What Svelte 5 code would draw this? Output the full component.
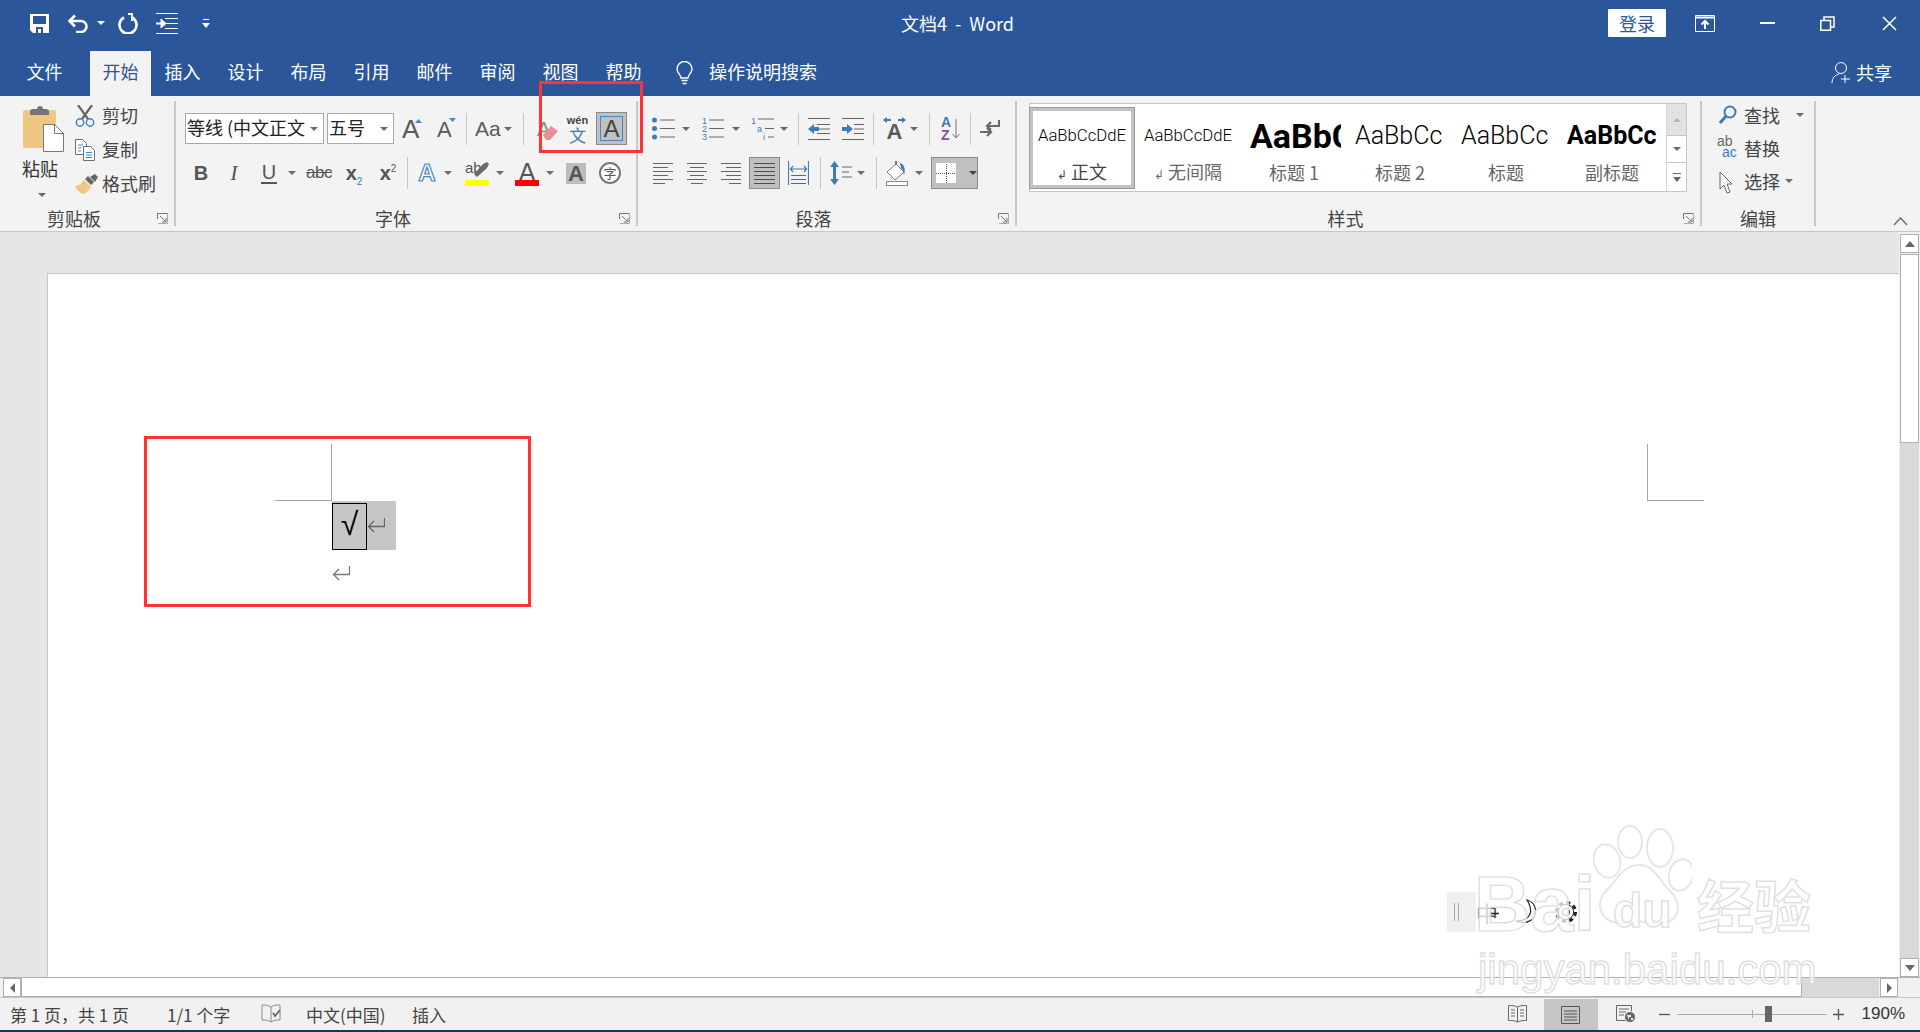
<script>
  const tabs = ['插入','设计','布局','引用','邮件','审阅','视图','帮助'];
</script>

{#snippet launcher()}
  <svg class="launch" width="11" height="11" viewBox="0 0 11 11" fill="none" stroke="#777"><path d="M.5 6V.5H10.5M3 3l6 6M9 5v4H5"/><path d="M10.5 1v9.5H1" stroke="#aaa"/></svg>
{/snippet}

<div class="app">
  <header class="titlebar">
    <div class="qat">
      <svg width="19" height="19" viewBox="0 0 19 19"><path fill="#fff" d="M0 0h19v19H3l-3-3z"/><path fill="#2b579a" d="M3 2h13v8H3zM6 13h7v6h-2v-4H8v4H6z"/></svg>
      <svg class="m18" width="22" height="19" viewBox="0 0 22 19" fill="none" stroke="#fff" stroke-width="2.6"><path d="M8 1.5 2.5 7 8 12.5M3 7h11a5.5 5.5 0 0 1 0 11H9"/></svg>
      <i class="tri w m8"></i>
      <svg class="m13" width="20" height="21" viewBox="0 0 20 21" fill="none" stroke="#fff" stroke-width="2.6"><path d="M6 4.500a8.500 8.500 0 1 0 8 0"/><path d="M14 1v7M10 1h5" stroke-width="2"/></svg>
      <svg class="m18" width="22" height="21" viewBox="0 0 22 21" fill="none" stroke="#fff"><path d="M0 .5h22M9 5.500h13M9 10.500h13M9 15.500h13M0 20.500h22"/><path d="M0 10.500h6" stroke-width="2"/><path d="m5 6 5 4.500-5 4.500z" fill="#fff"/></svg>
      <svg class="m24" width="8" height="9" viewBox="0 0 8 9" fill="#fff"><path d="M1 0h6v1H1zM0 4h8L4 9z"/></svg>
    </div>
    <div class="doctitle">文档4&nbsp;&nbsp;-&nbsp;&nbsp;Word</div>
    <div class="winctl">
      <button class="login">登录</button>
      <svg class="m29" width="20" height="17" viewBox="0 0 20 17" fill="none" stroke="#fff"><path d="M.5.500h19v16H.5z"/><path d="M1 2.500h18" stroke-width="2"/><path d="M10 14V6M6.500 9.500 10 6l3.500 3.500" stroke-width="2"/></svg>
      <svg class="m45" width="15" height="2" viewBox="0 0 15 2"><path fill="#fff" d="M0 0h15v2H0z"/></svg>
      <svg class="m45" width="15" height="15" viewBox="0 0 15 15" fill="none" stroke="#fff"><path d="M.8 4.500h9.700v9.700H.8zM4 4V1h10v10h-3" stroke-width="1.500"/></svg>
      <svg class="m47" width="15" height="15" viewBox="0 0 15 15" fill="none" stroke="#fff" stroke-width="1.500"><path d="m1 1 13 13M14 1 1 14"/></svg>
    </div>
  </header>

  <nav class="tabs">
    <span class="tab first">文件</span>
    <span class="tab active">开始</span>
    {#each tabs as t}<span class="tab">{t}</span>{/each}
    <svg class="bulb" width="17" height="24" viewBox="0 0 17 24" fill="none" stroke="#fff" stroke-width="1.300"><path d="M5 17c0-3-4-5-4-9a7.500 7.500 0 0 1 15 0c0 4-4 6-4 9z"/><path d="M5.500 19.500h6M6.500 22.500h4" stroke-width="1.600"/></svg>
    <span class="search">操作说明搜索</span>
    <span class="share">
      <svg width="21" height="23" viewBox="0 0 21 23" fill="none" stroke="#fff"><circle cx="10" cy="7" r="5.500"/><path d="M1 22c0-5 3-8 7-9M14 14v8M10 18h9"/></svg>
      共享
    </span>
  </nav>

  <section class="ribbon">
    <div class="group clip">
      <div class="clipbody">
        <div class="pastecol">
          <svg width="41" height="46" viewBox="0 0 41 46"><rect y="4" width="33" height="38" rx="2" fill="#eec882"/><path fill="#757575" d="M7 6c0-2 1-3 3-3h4c0-4 6-4 6 0h3c2 0 3 1 3 3v3H7z"/><path fill="#fff" stroke="#777" d="M20.500 18.500h11l9 9v18h-20z"/><path fill="none" stroke="#777" d="M31.500 18.500v9h9"/></svg>
          <span class="pastelabel">粘贴</span>
          <i class="tri pastetri"></i>
        </div>
        <div class="cliprows">
          <div class="cliprow">
            <svg width="20" height="22" viewBox="0 0 20 22" fill="none"><path d="m3 0 10 14M17 0 7 14" stroke="#666" stroke-width="2.200"/><circle cx="5" cy="17.500" r="3.700" stroke="#3e7cb8" stroke-width="1.400"/><circle cx="15" cy="17.500" r="3.700" stroke="#3e7cb8" stroke-width="1.400"/></svg>
            <span>剪切</span>
          </div>
          <div class="cliprow">
            <svg width="20" height="22" viewBox="0 0 20 22" fill="#fff" stroke="#6d6d6d"><path d="M.5.500h7l4 4v11H.5z"/><path d="M8.500 7.500h7l4 4v10h-11z"/><path d="M3 6h5M3 9h3M3 12h3" stroke="#4a86c5"/><path d="M11 13.500h6M11 16h6M11 18.500h6" stroke="#4a86c5"/></svg>
            <span>复制</span>
          </div>
          <div class="cliprow">
            <svg width="24" height="20" viewBox="0 0 24 20"><path fill="#eec882" d="M0 12c4 0 7-3 9-6l7 7c-2 3-5 6-8 7-3-1-6-4-8-8z"/><path fill="#666" d="m10 5 3-3 6 6-3 3zM15 3l5-3 3 3-3 5z"/></svg>
            <span>格式刷</span>
          </div>
        </div>
      </div>
      <div class="glabel wl">剪贴板</div>
      {@render launcher()}
    </div>

    <div class="group font">
      <div class="row r1">
        <div class="selbox fname m9">等线 (中文正文<i class="tri"></i></div>
        <div class="selbox fsize m3">五号<i class="tri"></i></div>
        <span class="glyph gA m8">A<svg class="upd" width="7" height="4" viewBox="0 0 7 4"><path fill="#4a86c5" d="M0 4 3.500 0 7 4z"/></svg></span>
        <span class="glyph gA2 m15">A<svg class="upd" width="7" height="4" viewBox="0 0 7 4"><path fill="#4a86c5" d="M0 0h7L3.500 4z"/></svg></span>
        <b class="sep m10"></b>
        <span class="glyph aa m8">Aa</span><i class="tri m4"></i>
        <b class="sep m11"></b>
        <span class="clearf m13">A<svg width="15" height="14" viewBox="0 0 15 14"><path fill="#ec8c98" d="m0 9 8-9 7 5-8 9H3z"/></svg></span>
        <span class="wen m10"><em>wén</em><u>文</u></span>
        <span class="aBox m8"><span>A</span></span>
      </div>
      <div class="row r2">
        <span class="fm b">B</span>
        <span class="fm i m17">I</span>
        <span class="fm ul m19">U</span><i class="tri m11"></i>
        <span class="fm abc m10">abc</span>
        <span class="fm xs m12">x<sub>2</sub></span>
        <span class="fm xs m14">x<sup>2</sup></span>
        <b class="sep m9"></b>
        <span class="fm fx m9">A</span><i class="tri m7"></i>
        <span class="hl m13"><em>ab</em><svg width="15" height="15" viewBox="0 0 15 15"><path fill="#6a6a6a" d="m0 12 9-10 4-2 2 2-2 4-10 9z"/></svg><i></i></span><i class="tri m7"></i>
        <span class="fc m11">A<i></i></span><i class="tri m7"></i>
        <span class="shade m12">A</span>
        <span class="ziring m13">字</span>
      </div>
      <div class="glabel wl">字体</div>
      {@render launcher()}
    </div>

    <div class="group para">
      <div class="row r1">
        <svg class="m14" width="23" height="23" viewBox="0 0 23 23"><g fill="#3e7cb8"><circle cx="2.500" cy="3" r="2.500"/><circle cx="2.500" cy="11.500" r="2.500"/><circle cx="2.500" cy="20" r="2.500"/></g><path d="M8 3h15M8 11.500h15M8 20h15" stroke="#666"/></svg>
        <i class="tri m7"></i>
        <svg class="m12" width="22" height="23" viewBox="0 0 22 23"><g fill="#3e7cb8" font-size="9" font-family="Liberation Sans"><text x="0" y="7">1</text><text x="0" y="15">2</text><text x="0" y="23">3</text></g><path d="M7 3h15M7 11.500h15M7 20h15" stroke="#666"/></svg>
        <i class="tri m8"></i>
        <svg class="m11" width="23" height="23" viewBox="0 0 23 23"><g fill="#3e7cb8" font-size="9" font-family="Liberation Sans"><text x="0" y="7">1</text><text x="6" y="15">a</text><text x="12" y="23">i</text></g><path d="M7 2h16M14 11.500h9M17 20h6" stroke="#666"/></svg>
        <i class="tri m6"></i>
        <b class="sep m10"></b>
        <svg class="m9" width="22" height="22" viewBox="0 0 22 22"><path d="M0 .5h22M9 6.500h13M9 11h13M9 15.500h13M0 21.500h22" stroke="#666"/><path d="M0 11 6 6v3h5v4H6v3z" fill="#3e7cb8"/></svg>
        <svg class="m12" width="22" height="22" viewBox="0 0 22 22"><path d="M0 .5h22M12 6.500h10M12 11h10M12 15.500h10M0 21.500h22" stroke="#666"/><path d="M11 11 5 6v3H0v4h5v3z" fill="#3e7cb8"/></svg>
        <b class="sep m9"></b>
        <span class="tdir m9"><svg width="23" height="6" viewBox="0 0 23 6"><path d="M0 3l4-3v2h4v2H4v2zM23 3l-4-3v2h-4v2h4v2z" fill="#3e7cb8"/></svg><span>A</span></span>
        <i class="tri m4"></i>
        <b class="sep m11"></b>
        <span class="sort m11"><em>A</em><em class="z">Z</em><svg width="8" height="20" viewBox="0 0 8 20" fill="none" stroke="#777"><path d="M4 0v19M.5 15 4 19l3.500-4"/></svg></span>
        <b class="sep m10"></b>
        <svg class="m9" width="20" height="18" viewBox="0 0 20 18" fill="none" stroke="#6a6a6a" stroke-width="2.200"><path d="M19 0v6H8M11 2 7 6l4 4"/><path d="M0 12h10M7 8l4 4-4 4"/></svg>
      </div>
      <div class="row r2">
        <svg class="m15" width="20" height="22" viewBox="0 0 20 22" stroke="#666"><path d="M0 1.500h20M0 5.500h15M0 9.500h20M0 13.500h15M0 17.500h20M0 21.500h12"/></svg>
        <svg class="m14" width="20" height="22" viewBox="0 0 20 22" stroke="#666"><path d="M0 1.500h20M3 5.500h14M0 9.500h20M3 13.500h14M0 17.500h20M4 21.500h12"/></svg>
        <svg class="m14" width="20" height="22" viewBox="0 0 20 22" stroke="#666"><path d="M0 1.500h20M5 5.500h15M0 9.500h20M5 13.500h15M0 17.500h20M8 21.500h12"/></svg>
        <span class="toggled m8"><svg width="21" height="22" viewBox="0 0 21 22" stroke="#4d4d4d"><path d="M0 1.500h21M0 5.500h21M0 9.500h21M0 13.500h21M0 17.500h21M0 21.500h21"/></svg></span>
        <svg class="m8" width="21" height="24" viewBox="0 0 21 24" fill="none"><path d="M.5 0v24M20.500 0v24M3 8h15M5 5 2.500 8 5 11M16 5l2.500 3-2.500 3" stroke="#3e7cb8" stroke-width="1.200"/><path d="M3 14.500h15M3 18.500h15M3 22.500h15" stroke="#666"/></svg>
        <b class="sep m11"></b>
        <svg class="m9" width="22" height="24" viewBox="0 0 22 24"><path d="M4.500 0 9 6H6v12h3l-4.500 6L0 18h3V6H0z" fill="#3e7cb8"/><path d="M12 6h10M12 11h7M12 16h10" stroke="#666"/></svg>
        <i class="tri m5"></i>
        <b class="sep m11"></b>
        <svg class="m9" width="22" height="25" viewBox="0 0 22 25"><path d="M1 11 10 3l8 8-9 8z" fill="#fff" stroke="#777"/><path d="M9 0v4h2V0z" fill="#777"/><path d="M14 2c4 1 6 6 4 12l-1-5-2-2z" fill="#3e7cb8"/><rect x=".5" y="20.500" width="21" height="4" fill="#fff" stroke="#888"/></svg>
        <i class="tri m7"></i>
        <span class="toggled borderbox m8"><span class="cross"></span><i class="tri dark"></i></span>
      </div>
      <div class="glabel wl">段落</div>
      {@render launcher()}
    </div>

    <div class="group styles">
      <div class="gallery">
        <div class="sitem sel"><span class="s1">AaBbCcDdE</span><span class="slabel dk"><small>↲</small> 正文</span></div>
        <div class="sitem"><span class="s1">AaBbCcDdE</span><span class="slabel"><small>↲</small> 无间隔</span></div>
        <div class="sitem"><span class="s2">AaBbCc</span><span class="slabel">标题 1</span></div>
        <div class="sitem"><span class="s3">AaBbCc</span><span class="slabel">标题 2</span></div>
        <div class="sitem"><span class="s3">AaBbCc</span><span class="slabel">标题</span></div>
        <div class="sitem"><span class="s4">AaBbCc</span><span class="slabel">副标题</span></div>
        <div class="gscroll">
          <span class="gup"><i class="tri up"></i></span>
          <span class="gmid"><i class="tri"></i></span>
          <span class="gmore"><svg width="8" height="9" viewBox="0 0 8 9" fill="#666"><path d="M0 0h8v1H0zM0 4h8L4 9z"/></svg></span>
        </div>
      </div>
      <div class="glabel wl">样式</div>
      {@render launcher()}
    </div>

    <div class="group edit">
      <div class="editrows">
        <div class="erow">
          <svg width="18" height="19" viewBox="0 0 18 19" fill="none" stroke="#3e7cb8"><circle cx="11" cy="7" r="5.500" stroke-width="2"/><path d="m7 11-6 7" stroke-width="3"/></svg>
          <span>查找</span><i class="tri m16"></i>
        </div>
        <div class="erow">
          <span class="abac"><em>ab</em><em class="ac">ac</em></span>
          <span>替换</span>
        </div>
        <div class="erow">
          <svg width="14" height="24" viewBox="0 0 14 24" fill="#fff" stroke="#666"><path d="M1 1v17l4-4 3 8 3-1-3-8h5z"/></svg>
          <span class="sel-t">选择</span><i class="tri m5"></i>
        </div>
      </div>
      <div class="glabel">编辑</div>
    </div>

    <div class="collapse">
      <svg width="15" height="9" viewBox="0 0 15 9" fill="none" stroke="#666" stroke-width="1.300"><path d="m1 8 6.500-7L14 8"/></svg>
    </div>
  </section>

  <main class="docarea">
    <div class="canvas">
      <div class="page">
        <span class="mark tl"></span>
        <span class="mark tr"></span>
        <div class="line">
          <span class="selrun">
            <span class="check">√</span>
            <svg class="pm" width="18" height="16" viewBox="0 0 18 16" fill="none" stroke="#666"><path d="M17.500 0v8.500H2M7 3 1.500 8.500 7 14" stroke-width="1.300"/></svg>
          </span>
        </div>
        <div class="line second">
          <svg width="18" height="16" viewBox="0 0 18 16" fill="none" stroke="#777"><path d="M17.500 0v8.500H2M7 3 1.500 8.500 7 14" stroke-width="1.300"/></svg>
        </div>
        <div class="redbox docred"></div>
      </div>
    </div>
    <aside class="vscroll">
      <span class="sbtn"><i class="tri up big"></i></span>
      <span class="vthumb"></span>
      <span class="vtrack"></span>
      <span class="sbtn"><i class="tri big"></i></span>
    </aside>
  </main>

  <div class="hscroll">
    <span class="sbtn h"><i class="tri left"></i></span>
    <span class="hthumb"></span>
    <span class="htrack"></span>
    <span class="sbtn h"><i class="tri right"></i></span>
  </div>

  <footer class="status">
    <span class="stxt first">第 1 页，共 1 页</span>
    <span class="stxt s2g">1/1 个字</span>
    <svg class="proof" width="21" height="20" viewBox="0 0 21 20" fill="none" stroke="#8a8a8a"><path d="M10 3c-3-2-6-2-9-2v15c3 0 6 0 9 2 3-2 6-2 9-2V1c-3 0-6 0-9 2zM10 3v15"/><path d="m12 9 2 3 5-6" stroke="#666" stroke-width="1.800"/></svg>
    <span class="stxt s3g">中文(中国)</span>
    <span class="stxt s4g">插入</span>
    <div class="sright">
      <svg width="19" height="18" viewBox="0 0 19 18" fill="none" stroke="#666"><path d="M.5.500c3 0 6 0 9 1.500 3-1.500 6-1.500 9-1.500v15c-3 0-6 0-9 1.500-3-1.500-6-1.500-9-1.500zM9.500 2v15M3 5h4M3 8h4M3 11h4M12 5h4M12 8h4M12 11h4"/></svg>
      <span class="printview"><svg width="19" height="18" viewBox="0 0 19 18" fill="none" stroke="#555"><path d="M.5.500h18v17H.5zM3 5h13M3 8h13M3 11h13M3 14h13"/></svg></span>
      <svg class="web" width="20" height="18" viewBox="0 0 20 18"><path d="M.5.500h15v15H.5zM3 4h10M3 7h7M3 10h5" fill="none" stroke="#666"/><circle cx="14" cy="12" r="5.500" fill="#666" stroke="#f1f1f1"/><path d="M11 10h4v2h-2v3zM15 13h2v2h-2z" fill="#f1f1f1"/></svg>
      <svg class="zm" width="11" height="11" viewBox="0 0 11 11"><path d="M0 5.500h11" stroke="#555" stroke-width="1.300"/></svg>
      <span class="slider"><i class="tick"></i><i class="thumb"></i></span>
      <svg class="zp" width="11" height="11" viewBox="0 0 11 11"><path d="M0 5.500h11M5.500 0v11" stroke="#555" stroke-width="1.300"/></svg>
      <span class="pct">190%</span>
    </div>
  </footer>
  <div class="taskedge"></div>

  <div class="redbox ribred"></div>

  <div class="ime">
    <span class="grip"></span>
    <span class="zh">中<svg width="9" height="3" viewBox="0 0 9 3"><path d="M0 0v3M0 1.500h9" stroke="#222" stroke-width="1.500"/></svg></span>
    <svg class="moon" width="23" height="26" viewBox="0 0 23 26" fill="#fff" stroke="#222" stroke-width="1.200"><path d="M13 1c7 2 9 8 8.500 13-.8 7-9 12-20 8 8 0 14-3 15-9 .4-4-1-8-3.500-12z"/></svg>
    <svg class="gear" width="24" height="24" viewBox="0 0 24 24" fill="none" stroke="#222"><circle cx="12" cy="12" r="9.500" stroke-dasharray="4 3.460" stroke-width="3"/><circle cx="12" cy="12" r="7.600" fill="#fff"/><circle cx="12" cy="12" r="3.600"/></svg>
  </div>

  <div class="wm">
    <span class="wmbai">Bai</span>
    <svg class="wmpaw" width="100" height="100" viewBox="0 0 100 100" fill="#fff" stroke="#e4e4e4" stroke-width="2"><ellipse cx="15" cy="36" rx="13" ry="17" transform="rotate(-15 15 36)"/><ellipse cx="38" cy="17" rx="12" ry="16"/><ellipse cx="68" cy="23" rx="13" ry="19"/><ellipse cx="89" cy="50" rx="12" ry="16" transform="rotate(15 89 50)"/><path d="M47 40c11 0 17 8 24 18 7 9 15 14 15 24 0 13-11 17-24 17-6 0-11-3-16-3s-11 3-19 2C15 97 8 90 8 79c0-10 9-15 15-23 6-9 13-16 24-16z"/></svg>
    <span class="wmdu">du</span>
    <span class="wmcn">经验</span>
    <span class="wmurl">jingyan.baidu.com</span>
  </div>
</div>

<style>
  :global(body) { margin: 0; background: #fff; }
  .app { width: 1920px; height: 1032px; overflow: hidden; display: flex; flex-direction: column; position: relative;
    font-family: "Noto Sans CJK SC", "Liberation Sans", sans-serif; color: #444; }
  i, em, u { font-style: normal; text-decoration: none; }
  svg { display: block; flex: none; }

  .m3{margin-left:3px}.m4{margin-left:4px}.m5{margin-left:5px}.m6{margin-left:6px}.m7{margin-left:7px}.m8{margin-left:8px}.m9{margin-left:9px}
  .m10{margin-left:10px}.m11{margin-left:11px}.m12{margin-left:12px}.m13{margin-left:13px}.m14{margin-left:14px}.m15{margin-left:15px}.m16{margin-left:16px}.m17{margin-left:17px}.m18{margin-left:18px}.m19{margin-left:19px}
  .m24{margin-left:24px}.m29{margin-left:29px}.m45{margin-left:45px}.m47{margin-left:47px}

  .tri { display: block; flex: none; width: 0; height: 0; border-left: 4px solid transparent; border-right: 4px solid transparent; border-top: 4px solid #6a6a6a; }
  .tri.w { border-top-color: #fff; }
  .tri.dark { border-top-color: #444; }
  .tri.up { border-top: 0; border-bottom: 4px solid #b5b5b5; }
  .tri.big { border-left-width: 5px; border-right-width: 5px; border-top-width: 6px; }
  .tri.up.big { border-top: 0; border-bottom: 6px solid #666; }
  .tri.left { border: 0; border-top: 5px solid transparent; border-bottom: 5px solid transparent; border-right: 5px solid #666; }
  .tri.right { border: 0; border-top: 5px solid transparent; border-bottom: 5px solid transparent; border-left: 5px solid #666; }

  .titlebar { height: 51px; flex: none; background: #2b579a; display: grid; grid-template-columns: 1fr auto 1fr; align-items: center; padding-bottom: 5px; box-sizing: border-box; }
  .qat { display: flex; align-items: center; margin-left: 30px; }
  .doctitle { color: #fff; font-size: 18px; line-height: 24px; margin-left: -5px; }
  .winctl { display: flex; align-items: center; justify-content: flex-end; margin-right: 23px; }
  .login { width: 58px; height: 28px; padding: 0; border: 0; border-radius: 1px; background: #fff; color: #2b579a; font: 18px/28px "Noto Sans CJK SC", sans-serif; }

  .tabs { height: 45px; flex: none; background: #2b579a; display: flex; padding-left: 14px; box-sizing: border-box; }
  .tab { width: 63px; height: 45px; text-align: center; font-size: 18px; line-height: 40px; color: #fff; flex: none; }
  .tab.first { width: 61px; margin-right: 15px; }
  .tab.active { width: 61px; background: #f3f3f3; color: #2b579a; }
  .bulb { margin: 10px 0 0 21px; }
  .search { margin-left: 16px; font-size: 18px; line-height: 40px; color: #fff; }
  .share { margin-left: auto; margin-right: 28px; display: flex; align-items: center; gap: 4px; height: 42px; color: #fff; font-size: 18px; }

  .ribbon { height: 136px; flex: none; background: #f3f3f3; border-bottom: 1px solid #c6c6c6; box-sizing: border-box; display: flex; }
  .group { height: 125px; margin-top: 5px; border-right: 2px solid #c8c8c8; box-sizing: border-box; flex: none; display: flex; flex-direction: column; position: relative; }
  .glabel { margin-top: auto; height: 16px; line-height: 16px; font-size: 18px; text-align: center; color: #444; }
  .glabel.wl { padding-right: 26px; }
  .launch { position: absolute; right: 6px; bottom: 2px; }

  .clip { width: 176px; }
  .clipbody { display: flex; }
  .pastecol { width: 52px; margin: 5px 0 0 23px; display: flex; flex-direction: column; flex: none; }
  .pastelabel { font-size: 18px; line-height: 22px; margin: 5px 0 0 -1px; color: #333; }
  .pastetri { margin: 14px 0 0 15px; }
  .cliprows { margin: -2px 0 0 -1px; }
  .cliprow { height: 34px; display: flex; align-items: center; font-size: 18px; color: #444; position: relative; padding-left: 28px; }
  .cliprow span { position: relative; top: -1px; }
  .cliprow svg { position: absolute; left: 1px; }

  .font { width: 462px; }
  .para { width: 379px; }
  .row { display: flex; align-items: center; }
  .r1 { height: 33px; margin-top: 11px; }
  .r2 { height: 32px; margin-top: 12px; }
  .sep { display: block; flex: none; width: 1px; height: 32px; background: #c6c6c6; }

  .selbox { height: 31px; box-sizing: border-box; border: 1px solid #a9a9a9; background: #fff; display: flex; align-items: center; font-size: 18px; color: #222; padding: 0 0 4px 1px; white-space: nowrap; overflow: hidden; flex: none; }
  .fname { width: 139px; }
  .fsize { width: 67px; justify-content: flex-start; }
  .selbox .tri { margin: 4px 5px 0 auto; }
  .glyph { font-family: "Liberation Sans", sans-serif; color: #5a5a5a; position: relative; display: block; flex: none; }
  .gA { font-size: 26px; line-height: 30px; width: 20px; }
  .gA2 { font-size: 22px; line-height: 30px; width: 19px; padding-top: 2px; box-sizing: border-box; }
  .upd { position: absolute; right: 0; top: 5px; }
  .aa { font-size: 21px; line-height: 30px; width: 25px; }
  .clearf { position: relative; width: 20px; height: 24px; display: block; color: #8a8a8a; font: 20px/24px "Liberation Sans", sans-serif; flex: none; }
  .clearf svg { position: absolute; left: 6px; top: 9px; }
  .wen { width: 21px; display: flex; flex-direction: column; align-items: center; flex: none; }
  .wen em { font: bold 11px/11px "Liberation Sans", sans-serif; color: #444; }
  .wen u { font-size: 17px; line-height: 17px; color: #3e7cb8; }
  .aBox { width: 31px; height: 33px; box-sizing: border-box; background: #c0c0c0; border: 1px solid #8a8a8a; display: flex; align-items: center; justify-content: center; flex: none; }
  .aBox span { width: 23px; height: 25px; box-sizing: border-box; border: 1px solid #4a86c5; font: 24px/24px "Liberation Sans", sans-serif; color: #444; text-align: center; }

  .fm { font-family: "Liberation Sans", sans-serif; color: #555; display: block; flex: none; text-align: center; position: relative; }
  .b { font-weight: bold; font-size: 20px; width: 16px; margin-left: 17px; }
  .i { font-family: "Liberation Serif", serif; font-style: italic; font-size: 22px; width: 16px; }
  .ul { font-size: 20px; width: 16px; border-bottom: 2px solid #555; line-height: 20px; }
  .abc { font-size: 17px; width: 26px; text-decoration: line-through; letter-spacing: -0.500px; }
  .xs { font-size: 20px; width: 20px; font-weight: bold; }
  .xs sub, .xs sup { font-size: 10px; color: #3e7cb8; font-weight: normal; line-height: 0; }
  .xs sup { color: #555; }
  .fx { font-size: 24px; width: 20px; font-weight: bold; color: #fff; -webkit-text-stroke: 1.200px #4a86c5; }
  .hl { width: 24px; height: 24px; display: block; position: relative; flex: none; }
  .hl em { font: 15px/15px "Liberation Sans", sans-serif; color: #555; position: absolute; left: 0; top: -1px; }
  .hl svg { position: absolute; right: 0; top: 1px; }
  .hl i { position: absolute; left: 0; right: 0; bottom: -1px; height: 6px; background: #ff0; }
  .fc { width: 24px; height: 26px; display: block; position: relative; text-align: center; font: 25px/25px "Liberation Sans", sans-serif; color: #555; flex: none; }
  .fc i { position: absolute; left: 0; right: 0; bottom: 0; height: 6px; background: #f00; }
  .shade { width: 20px; height: 21px; background: #bdbdbd; text-align: center; font: bold 22px/21px "Liberation Sans", sans-serif; color: #555; flex: none; display: block; }
  .ziring { width: 22px; height: 22px; box-sizing: border-box; border: 2px solid #777; border-radius: 50%; font-size: 13px; line-height: 18px; text-align: center; color: #555; flex: none; display: block; background: #fff; }

  .tdir { width: 23px; display: flex; flex-direction: column; align-items: center; flex: none; }
  .tdir span { font: bold 22px/18px "Liberation Sans", sans-serif; color: #5a5a5a; }
  .sort { width: 19px; height: 26px; display: block; position: relative; flex: none; }
  .sort em { position: absolute; left: 0; top: -1px; font: bold 14px/14px "Liberation Sans", sans-serif; color: #3e7cb8; }
  .sort em.z { top: 12px; color: #8a4aa5; }
  .sort svg { position: absolute; right: 0; top: 3px; }
  .toggled { width: 31px; height: 32px; box-sizing: border-box; background: #c0c0c0; border: 1px solid #8a8a8a; display: flex; align-items: center; justify-content: center; flex: none; }
  .borderbox { width: 47px; justify-content: flex-start; padding-left: 4px; }
  .cross { width: 20px; height: 20px; background-color: #fff; background-image: repeating-linear-gradient(90deg,#555 0 1px,transparent 1px 2px), repeating-linear-gradient(0deg,#555 0 1px,transparent 1px 2px); background-size: 100% 1px, 1px 100%; background-position: 0 50%, 50% 0; background-repeat: no-repeat; }
  .borderbox .tri { margin-left: 13px; }

  .styles { width: 685px; }
  .gallery { margin: 2px 0 0 12px; width: 658px; height: 89px; box-sizing: border-box; border: 1px solid #c6c6c6; background: #fff; display: flex; padding-top: 3px; position: relative; }
  .sitem { width: 106px; height: 82px; box-sizing: border-box; flex: none; overflow: hidden; display: flex; flex-direction: column; align-items: center; border: 4px solid transparent; }
  .sitem.sel { background: #fff; border-color: #c2c2c2; outline: 1px solid #999; outline-offset: -1px; margin-left: -1px; }
  .s1, .s2, .s3, .s4 { font-family: Roboto, "Liberation Sans", sans-serif; color: #000; height: 50px; line-height: 50px; white-space: nowrap; width: 94px; overflow: hidden; text-align: center; }
  .s1 { font-size: 16.700px; font-weight: 300; }
  .s2 { font-size: 34px; font-weight: 700; text-align: left; padding-left: 3px; box-sizing: border-box; }
  .s3 { font-size: 25px; font-weight: 300; text-align: left; padding-left: 2px; box-sizing: border-box; }
  .s4 { font-size: 25px; font-weight: 700; text-align: left; padding-left: 2px; box-sizing: border-box; }
  .slabel { font-size: 18px; line-height: 22px; color: #666; margin-top: 0; white-space: nowrap; }
  .slabel.dk { color: #444; }
  .slabel small { font-size: 12px; }
  .gscroll { position: absolute; right: 0; top: 0; bottom: 0; width: 20px; display: flex; flex-direction: column; border-left: 1px solid #d6d6d6; box-sizing: border-box; background: #fff; }
  .gscroll span { display: flex; align-items: center; justify-content: center; box-sizing: border-box; }
  .gup { height: 31px; background: #e2e2e2; }
  .gmid { height: 28px; border-top: 1px solid #c6c6c6; border-bottom: 1px solid #c6c6c6; }
  .gmore { flex: 1; }

  .edit { width: 114px; }
  .editrows { margin: -3px 0 0 15px; }
  .erow { height: 33px; display: flex; align-items: center; position: relative; padding-left: 27px; font-size: 18px; color: #444; }
  .erow svg { position: absolute; left: 2px; top: 7px; }
  .abac { position: absolute; left: 0; top: 5px; display: flex; flex-direction: column; font: 14px/11px "Liberation Sans", sans-serif; color: #666; }
  .abac em { display: block; }
  .abac em.ac { color: #3e7cb8; padding-left: 5px; }
  .collapse { flex: 1; display: flex; justify-content: flex-end; align-items: flex-end; padding: 0 12px 5px 0; }

  .docarea { flex: 1; min-height: 0; display: flex; background: #e6e6e6; }
  .canvas { flex: 1; min-width: 0; padding: 41px 0 0 47px; box-sizing: border-box; display: flex; }
  .page { flex: 1; background: #fff; border-left: 1px solid #c6c6c6; border-top: 1px solid #c6c6c6; position: relative; padding: 227px 0 0 284px; box-sizing: border-box; }
  .mark { position: absolute; box-sizing: border-box; }
  .mark.tl { left: 227px; top: 170px; width: 57px; height: 57px; border-right: 1px solid #a6a6a6; border-bottom: 1px solid #a6a6a6; }
  .mark.tr { left: 1599px; top: 170px; width: 57px; height: 57px; border-left: 1px solid #a6a6a6; border-bottom: 1px solid #a6a6a6; }
  .selrun { display: flex; align-items: center; width: 64px; height: 49px; background: #c6c6c6; }
  .check { width: 35px; height: 47px; margin-top: 2px; box-sizing: border-box; border: 1px solid #000; text-align: center; color: #000; font: 32px/40px "Liberation Sans", sans-serif; flex: none; }
  .second { margin-top: 16px; }
  .redbox { position: absolute; box-sizing: border-box; border: 3px solid #f33; pointer-events: none; }
  .docred { left: 96px; top: 162px; width: 387px; height: 171px; }
  .ribred { left: 539px; top: 81px; width: 104px; height: 72px; }

  .vscroll { width: 21px; flex: none; display: flex; flex-direction: column; padding-top: 2px; background: #f1f1f1; box-sizing: border-box; align-items: flex-start; }
  .sbtn { display: flex; align-items: center; justify-content: center; width: 19px; height: 19px; box-sizing: border-box; border: 1px solid #b0b0b0; background: #fff; flex: none; margin-left: 1px; }
  .vthumb { width: 19px; height: 189px; box-sizing: border-box; border: 1px solid #b0b0b0; background: #fff; margin: 1px 0 0 1px; flex: none; }
  .vtrack { flex: 1; width: 19px; background: #d9d9d9; margin-left: 1px; }

  .hscroll { height: 20px; flex: none; background: #f1f1f1; border-top: 1px solid #b0b0b0; box-sizing: border-box; display: flex; padding-left: 2px; }
  .sbtn.h { height: 19px; width: 18px; }
  .hthumb { width: 1781px; box-sizing: border-box; border: 1px solid #b0b0b0; border-top: 0; background: #fff; flex: none; }
  .htrack { width: 77px; background: #d9d9d9; flex: none; }

  .status { height: 33px; flex: none; background: #f1f1f1; display: flex; align-items: center; box-sizing: border-box; border-top: 1px solid #c6c6c6; font-size: 17px; color: #444; }
  .stxt { white-space: nowrap; flex: none; }
  .stxt.first { margin-left: 10px; width: 125px; }
  .s2g { margin-left: 32px; width: 66px; }
  .proof { margin-left: 28px; }
  .s3g { margin-left: 24px; width: 78px; }
  .s4g { margin-left: 28px; }
  .sright { margin-left: auto; display: flex; align-items: center; height: 100%; padding-right: 15px; }
  .printview { width: 54px; height: 31px; margin: 1px 0 0 17px; background: #c6c6c6; display: flex; align-items: center; justify-content: center; }
  .web { margin-left: 18px; }
  .zm { margin-left: 23px; }
  .slider { width: 150px; height: 16px; margin-left: 7px; position: relative; display: block; background: linear-gradient(#aaa,#aaa) 0 50% / 100% 1px no-repeat; }
  .tick { position: absolute; left: 75px; top: 4px; width: 1px; height: 8px; background: #aaa; }
  .thumb { position: absolute; left: 88px; top: 0; width: 7px; height: 16px; background: #666; }
  .zp { margin-left: 6px; }
  .pct { margin-left: 18px; font: 17px "Liberation Sans", sans-serif; color: #333; }
  .taskedge { height: 2px; flex: none; background: #0c3b5a; }

  .ime { position: absolute; left: 1447px; top: 892px; height: 40px; display: flex; align-items: center; background: linear-gradient(90deg,#f0f0f0 29px,transparent 29px); width: 140px; }
  .grip { width: 5px; height: 18px; margin-left: 7px; border-left: 1px solid #aaa; border-right: 1px solid #aaa; box-sizing: border-box; flex: none; }
  .zh { margin-left: 17px; width: 22px; font-size: 22px; line-height: 26px; color: #555; position: relative; flex: none; }
  .zh svg { position: absolute; right: -1px; top: 13px; }
  .moon { margin-left: 16px; }
  .gear { margin-left: 17px; }

  .wm { position: absolute; left: 0; top: 0; width: 0; height: 0; pointer-events: none; }
  .wm span { position: absolute; white-space: nowrap; color: rgba(255,255,255,.75); -webkit-text-stroke: 1.500px rgba(218,218,218,.85); font-family: "Liberation Sans", sans-serif; font-weight: bold; }
  .wmbai { left: 1474px; top: 859px; font-size: 78px; line-height: 90px; }
  .wmpaw { position: absolute; left: 1592px; top: 825px; opacity: .9; }
  .wmdu { left: 1613px; top: 886px; font-size: 48px; line-height: 50px; }
  .wm .wmcn { left: 1697px; top: 868px; font: bold 57px/70px "Noto Sans CJK SC", sans-serif; }
  .wm .wmurl { left: 1478px; top: 945px; font-size: 42px; line-height: 50px; font-weight: normal; }
</style>
